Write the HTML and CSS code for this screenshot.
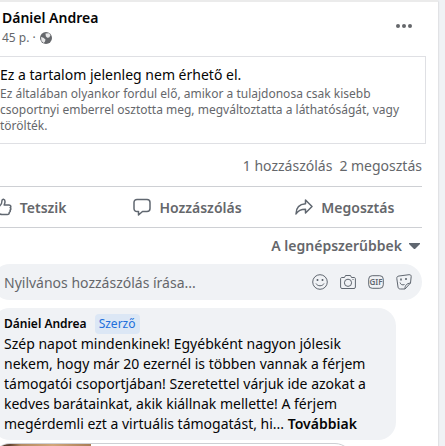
FILE: index.html
```
<!DOCTYPE html>
<html lang="hu">
<head>
    <meta charset="UTF-8">
    <meta name="viewport" content="width=device-width, initial-scale=1.0">
    <title>Dániel Andrea bejegyzése</title>
    <link rel="stylesheet" href="styles.css">
</head>
<body>

    <main class="post">
        <header class="post-header">
            <div>
                <a href="#" class="author">Dániel Andrea</a>
                <div class="meta">
                    <span>45 p. ·</span>
                    <svg width="12" height="12" viewBox="0 0 12 12">
                        <circle cx="6" cy="6" r="6" fill="#65676b"/>
                        <path d="M5.500 1.500L9 1.300l1.500 2-1.300 2.200-2 .3-1.400-1.500zM1 5l2.500.8 2 1.700L5 9.500 3.800 11 1.500 9z" fill="#fff" opacity=".85"/>
                    </svg>
                </div>
            </div>
            <button class="more" aria-label="Műveletek">
                <svg width="16" height="4" viewBox="0 0 16 4" fill="#65676b">
                    <circle cx="2" cy="2" r="2"/>
                    <circle cx="8" cy="2" r="2"/>
                    <circle cx="14" cy="2" r="2"/>
                </svg>
            </button>
        </header>

        <!-- Nem elérhető tartalom -->
        <section class="unavailable">
            <h1>Ez a tartalom jelenleg nem érhető el.</h1>
            <p>Ez általában olyankor fordul elő, amikor a tulajdonosa csak kisebb<br>
            csoportnyi emberrel osztotta meg, megváltoztatta a láthatóságát, vagy<br>
            törölték.</p>
        </section>

        <div class="counts">
            <a href="#">1 hozzászólás</a>
            <a href="#">2 megosztás</a>
        </div>

        <div class="actions">
            <button class="action">
                <svg class="icon" width="18" height="18" viewBox="0 0 18 18">
                    <path d="M1 8h3.500v8.500H1zM4.500 9C7 7.500 8 5.500 8 2.500 8 .8 11 .6 11 3.500c0 1.500-.5 2.500-.8 3.500H15c2 0 2.200 2 1.200 2.700 1 .8.800 2-.2 2.500.6 1 .1 1.900-.8 2.200.2 1.400-.5 2.100-1.900 2.100H8c-1.500 0-2-.5-3.500-1z"/>
                </svg>
                Tetszik
            </button>
            <button class="action">
                <svg class="icon" width="18" height="18" viewBox="0 0 18 18">
                    <path d="M4 1.500h10c1.800 0 3 1.200 3 3v6c0 1.800-1.200 3-3 3h-4.500L5.500 17v-3.500H4c-1.800 0-3-1.200-3-3v-6c0-1.800 1.200-3 3-3z"/>
                </svg>
                Hozzászólás
            </button>
            <button class="action">
                <svg class="icon" width="18" height="18" viewBox="0 0 18 18">
                    <path d="M10.500 2L17 8.500 10.500 15v-3.800C6 11.200 3 12.500 1 16c0-5.500 3-9.700 9.500-10.200z"/>
                </svg>
                Megosztás
            </button>
        </div>

        <button class="sort">
            A legnépszerűbbek
            <svg width="11" height="6" viewBox="0 0 11 6"><path d="M0 0h11v1L6 6H5L0 1z" fill="#606770"/></svg>
        </button>

        <form class="comment-box">
            <input type="text" aria-label="Hozzászólás" placeholder="Nyilvános hozzászólás írása...">
            <button type="button" aria-label="Hangulatjel">
                <svg class="tool" width="16" height="16" viewBox="0 0 16 16">
                    <circle cx="8" cy="8" r="7.300"/>
                    <path d="M4 9.500c1.500 3 6.500 3 8 0"/>
                    <path d="M5.500 5v2M10.500 5v2" stroke-width="1.600"/>
                </svg>
            </button>
            <button type="button" aria-label="Fénykép">
                <svg class="tool" width="16" height="16" viewBox="0 0 16 16">
                    <path d="M2 3.500h2.500L5.500 1.500h5l1 2H14c1 0 1.400.5 1.400 1.400v8.200c0 .9-.5 1.400-1.400 1.400H2c-.9 0-1.400-.5-1.400-1.400V4.900C.6 4 1 3.500 2 3.500z"/>
                    <circle cx="8" cy="8.800" r="3.600"/>
                    <path d="M12.500 5.500h1"/>
                </svg>
            </button>
            <button type="button" aria-label="GIF">
                <svg class="tool" width="16" height="16" viewBox="0 0 16 16">
                    <rect x=".7" y="1.700" width="14.600" height="12.600" rx="3.500"/>
                    <text x="8" y="11" text-anchor="middle">GIF</text>
                </svg>
            </button>
            <button type="button" aria-label="Matrica">
                <svg class="tool" width="16" height="16" viewBox="0 0 16 16">
                    <path d="M3 2l10-1.300c1.500-.1 2.200.5 2.200 1.800L14.500 9 9 15H4.500C3 15 2.300 14.500 2 13L.8 4.500C.6 3 1.500 2.200 3 2zM9 15c-.2-3.500 1.500-5.500 5.500-6M4 8.500c.5 2 2.500 3 4.500 2"/>
                    <path d="M5 4.500v2M10 4v2" stroke-width="1.600"/>
                </svg>
            </button>
        </form>

        <!-- Hozzászólás a szerzőtől -->
        <article class="comment">
            <div class="comment-head">
                <a href="#">Dániel Andrea</a>
                <span class="badge">Szerző</span>
            </div>
            <p>Szép napot mindenkinek! Egyébként nagyon jólesik<br>
            nekem, hogy már 20 ezernél is többen vannak a férjem<br>
            támogatói csoportjában! Szeretettel várjuk ide azokat a<br>
            kedves barátainkat, akik kiállnak mellette! A férjem<br>
            megérdemli ezt a virtuális támogatást, hi... <a href="#">Továbbiak</a></p>
        </article>

        <div class="attachment">
            <div class="thumb"></div>
        </div>
    </main>

</body>
</html>
```
FILE: styles.css
```
* {
    box-sizing: border-box;
}

body {
    margin: 0;
    height: 100vh;
    overflow: hidden;
    background-color: #f0f2f5;
    color: #050505;
    font-family: "Noto Sans", sans-serif;
    font-size: 14px;
}

h1, p {
    margin: 0;
}

a {
    color: inherit;
    text-decoration: none;
}

button {
    padding: 0;
    border: none;
    background: none;
    color: #65676b;
    font: inherit;
    cursor: pointer;
}

svg {
    display: block;
}

/* a bejegyzés bal széle kilóg az ablakból */
.post {
    margin: 0 7px 0 -50px;
    padding: 7px 16px 0 0;
    min-height: 100vh;
    background-color: #fff;
    border-top: 2px solid #ebebeb;
    box-shadow: 0 1px 2px rgba(0, 0, 0, 0.2);
}

.post-header {
    display: flex;
    justify-content: space-between;
    padding: 0 10px 8px 52px;
}

.author {
    display: block;
    font-weight: 600;
    line-height: 18px;
}

.meta {
    display: flex;
    align-items: center;
    gap: 4px;
    color: #65676b;
    font-size: 12px;
    line-height: 21px;
}

.more {
    align-self: flex-start;
    padding: 15px 0;
}

.unavailable {
    margin-right: -4px;
    padding: 7px 0 9px 49px;
    border: 1px solid #dfe0e4;
}

.unavailable h1 {
    font-size: 14px;
    font-weight: 400;
    line-height: 22px;
}

.unavailable p {
    color: #65676b;
    font-size: 12px;
    line-height: 16px;
    white-space: nowrap;
}

.counts {
    display: flex;
    justify-content: flex-end;
    gap: 7px;
    padding: 12px 0 10px;
    color: #65676b;
    line-height: 20px;
}

.actions {
    display: grid;
    grid-template-columns: repeat(3, 1fr);
    border-top: 1px solid #ced0d4;
    border-bottom: 1px solid #ced0d4;
}

.action {
    display: flex;
    align-items: center;
    justify-content: center;
    gap: 8px;
    height: 40px;
    padding-left: 3px;
    font-weight: 600;
}

.icon {
    fill: none;
    stroke: #606770;
    stroke-width: 1.5;
    stroke-linejoin: round;
}

.sort {
    display: flex;
    align-items: center;
    gap: 7px;
    margin-left: auto;
    padding: 8px 2px 8px 0;
    font-weight: 600;
    line-height: 20px;
}

.comment-box {
    display: flex;
    align-items: center;
    gap: 12px;
    height: 36px;
    margin-left: 42px;
    padding: 0 10px 0 12px;
    border-radius: 18px;
    background-color: #f0f2f5;
}

.comment-box input {
    flex: 1;
    min-width: 0;
    padding: 0;
    border: none;
    outline: none;
    background: none;
    font: inherit;
}

.comment-box input::placeholder {
    color: #65676b;
    opacity: 1;
}

.tool {
    fill: none;
    stroke: #606770;
    stroke-width: 1;
}

.tool text {
    fill: #606770;
    stroke: none;
    font-size: 8px;
    font-weight: 600;
}

.comment {
    margin: 8px 26px 0 42px;
    padding: 6px 12px;
    border-radius: 18px;
    background-color: #f0f2f5;
    line-height: 20px;
    white-space: nowrap;
}

.comment-head {
    display: flex;
    gap: 8px;
    font-size: 12px;
    font-weight: 600;
}

.badge {
    padding: 0 4px;
    border-radius: 4px;
    background-color: #dce7f5;
    color: #216fdb;
    font-weight: 400;
}

.comment a {
    font-weight: 600;
}

.attachment {
    height: 80px;
    margin: 3px 69px 0 42px;
    overflow: hidden;
    border: 1px solid #ced0d4;
    border-radius: 18px;
}

.thumb {
    width: 98px;
    height: 80px;
    background: linear-gradient(90deg, #5b3d2c 0, #5b3d2c 16px, #b48a61 28px, #d2a679 60px, #a97d55 98px);
}
```
